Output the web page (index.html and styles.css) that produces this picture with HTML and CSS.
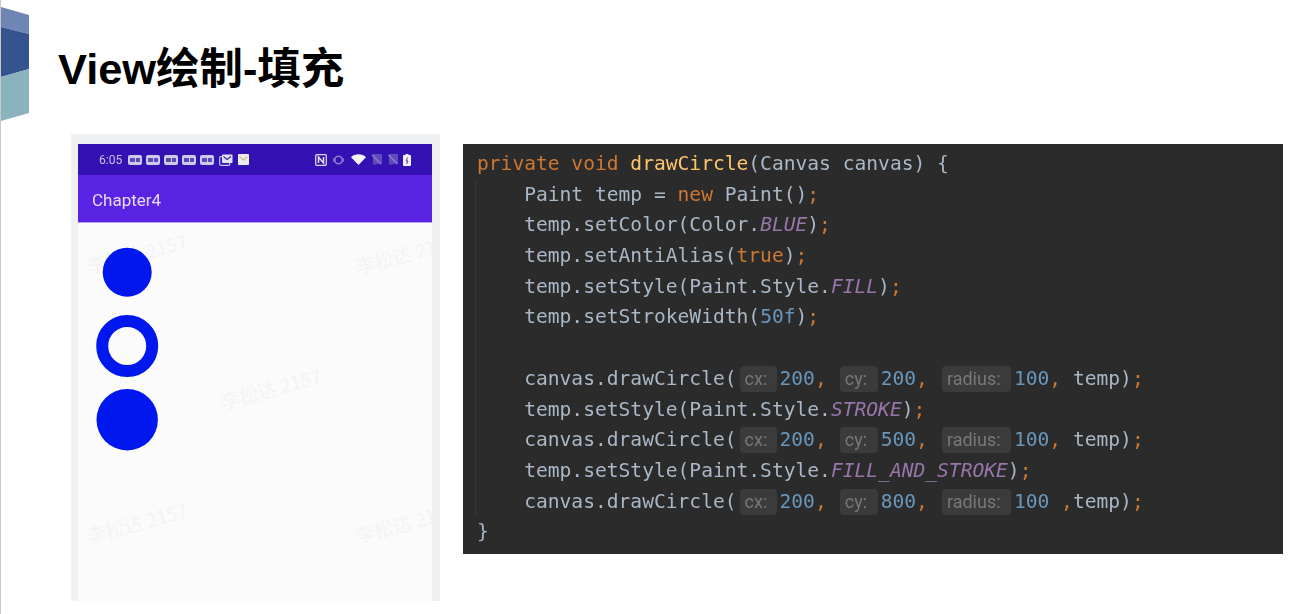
FILE: index.html
```html
<!DOCTYPE html>
<html lang="zh">
<head>
<meta charset="utf-8">
<title>View绘制-填充</title>
<link rel="stylesheet" href="styles.css">
</head>
<body>
<div class="slide">
  <svg class="decor" width="29" height="122" viewBox="0 0 29 122">
    <polygon points="0,7 28,15 28,34 0,27" fill="#6f86b5"/>
    <polygon points="0,27 28,34 28,69 0,77" fill="#34538f"/>
    <polygon points="0,77 28,69 28,113 0,121" fill="#8bb3bd"/>
  </svg>
  <h1 class="title">View绘制-填充</h1>
  <div class="content">
    <div class="phone">
      <div class="screen">
        <div class="statusbar">
          <span class="time">6:05</span>
          <span class="notif"><i></i><i></i></span>
          <span class="notif"><i></i><i></i></span>
          <span class="notif"><i></i><i></i></span>
          <span class="notif"><i></i><i></i></span>
          <span class="notif"><i></i><i></i></span>
          <svg class="ic gap1" width="14" height="12" viewBox="0 0 14 12"><rect x="0.7" y="2.7" width="10" height="8.6" rx="1" fill="none" stroke="#c9c3ea" stroke-width="1.2"/><rect x="3" y="0.5" width="10.5" height="8.5" rx="1" fill="#e4e1f5"/><path d="M4.5 2.5 8 5.5 12 2.5" fill="none" stroke="#3a2aa8" stroke-width="1.2"/></svg>
          <svg class="ic gap1" width="11" height="11" viewBox="0 0 11 11"><rect width="11" height="11" rx="1" fill="#eeeef2"/><path d="M1.5 2.5 5.5 6 9.5 2.5" fill="none" stroke="#c9c48a" stroke-width="1.4"/></svg>
          <span class="spacer"></span>
          <svg class="ic" width="12" height="12" viewBox="0 0 12 12"><rect x="0.7" y="0.7" width="10.6" height="10.6" rx="1" fill="none" stroke="#d8d6ee" stroke-width="1.3"/><path d="M3.5 9V3L8.5 9V3" fill="none" stroke="#e6e4f4" stroke-width="1.5"/></svg>
          <svg class="ic gap2" width="11" height="12" viewBox="0 0 11 12"><circle cx="5.5" cy="6" r="3.7" fill="none" stroke="#8d80d2" stroke-width="1.6"/><path d="M0.7 4V8M10.3 4V8" stroke="#8d80d2" stroke-width="1"/></svg>
          <svg class="ic gap3" width="15" height="11" viewBox="0 0 15 11"><path d="M0 3.2C4 -0.6 11 -0.6 15 3.2L7.5 11Z" fill="#f5f4fb"/></svg>
          <svg class="ic gap4" width="11" height="11" viewBox="0 0 11 11"><path d="M2 0H11V9L2 11Z" fill="#5f4cbb"/><path d="M1 1 10 10" stroke="#8a7bd0" stroke-width="1.4"/></svg>
          <svg class="ic gap5" width="10" height="11" viewBox="0 0 10 11"><path d="M1 0H10V9L1 11Z" fill="#5f4cbb"/><path d="M0.5 1 9.5 10" stroke="#8a7bd0" stroke-width="1.4"/></svg>
          <svg class="ic gap6" width="8" height="12" viewBox="0 0 8 12"><rect y="1" width="8" height="11" rx="1" fill="#f2f1f8"/><rect x="2.5" width="3" height="2" fill="#f2f1f8"/><path d="M4.6 3.5 3.2 7H5L3.6 10" fill="none" stroke="#3a2aa8" stroke-width="0.9"/></svg>
        </div>
        <div class="appbar">Chapter4</div>
        <div class="canvas">
          <span class="mark m1">李松达 2157</span>
          <span class="mark m2">李松达 2157</span>
          <span class="mark m3">李松达 2157</span>
          <span class="mark m4">李松达 2157</span>
          <span class="mark m5">李松达 2157</span>
          <svg class="shapes" width="354" height="240" viewBox="0 0 354 240">
            <circle cx="49.2" cy="49.2" r="24.5" fill="#0018ee"/>
            <circle cx="49.2" cy="123" r="25" fill="none" stroke="#0018ee" stroke-width="12"/>
            <circle cx="49.2" cy="196.7" r="30.7" fill="#0018ee"/>
          </svg>
        </div>
      </div>
    </div>
    <div class="code">
      <div class="guide"></div>
      <div class="ln"><span class="k">private void </span><span class="f">drawCircle</span>(Canvas canvas) {</div>
      <div class="ln in">Paint temp = <span class="k">new</span> Paint()<span class="k">;</span></div>
      <div class="ln in">temp.setColor(Color.<span class="c">BLUE</span>)<span class="k">;</span></div>
      <div class="ln in">temp.setAntiAlias(<span class="k">true</span>)<span class="k">;</span></div>
      <div class="ln in">temp.setStyle(Paint.Style.<span class="c">FILL</span>)<span class="k">;</span></div>
      <div class="ln in">temp.setStrokeWidth(<span class="n">50f</span>)<span class="k">;</span></div>
      <div class="ln in"></div>
      <div class="ln in">canvas.drawCircle(<span class="h hx">cx:</span><span class="n">200</span><span class="k">,</span><span class="h hy">cy:</span><span class="n">200</span><span class="k">,</span><span class="h hr">radius:</span><span class="n">100</span><span class="k">,</span> temp)<span class="k">;</span></div>
      <div class="ln in">temp.setStyle(Paint.Style.<span class="c">STROKE</span>)<span class="k">;</span></div>
      <div class="ln in">canvas.drawCircle(<span class="h hx">cx:</span><span class="n">200</span><span class="k">,</span><span class="h hy">cy:</span><span class="n">500</span><span class="k">,</span><span class="h hr">radius:</span><span class="n">100</span><span class="k">,</span> temp)<span class="k">;</span></div>
      <div class="ln in">temp.setStyle(Paint.Style.<span class="c">FILL_AND_STROKE</span>)<span class="k">;</span></div>
      <div class="ln in">canvas.drawCircle(<span class="h hx">cx:</span><span class="n">200</span><span class="k">,</span><span class="h hy">cy:</span><span class="n">800</span><span class="k">,</span><span class="h hr">radius:</span><span class="n">100</span> <span class="k">,</span>temp)<span class="k">;</span></div>
      <div class="ln">}</div>
    </div>
  </div>
</div>
</body>
</html>
```
FILE: styles.css
```css
* { box-sizing: border-box; }
html, body { margin: 0; padding: 0; background: #fff; }
body { width: 1294px; height: 614px; overflow: hidden; }
.slide {
  position: relative;
  height: 614px;
  border-left: 1px solid #c8c8c8;
  font-family: "Liberation Sans", "Noto Sans CJK SC", sans-serif;
}
.decor { position: absolute; left: 0; top: 0; display: block; }
.title {
  margin: 0;
  padding: 42px 0 0 57px;
  height: 134px;
  font-size: 43.4px;
  line-height: 54px;
  font-weight: 700;
  color: #000;
}
.content { display: flex; align-items: flex-start; padding-left: 70px; }
.phone {
  width: 369px;
  height: 467px;
  padding: 10px 8px 0 7px;
  background: #eff0f2;
}
.screen { height: 457px; display: flex; flex-direction: column; overflow: hidden; }
.statusbar {
  height: 31px;
  flex: none;
  display: flex;
  align-items: center;
  padding: 0 21px 0 21px;
  background: #3311b2;
  filter: blur(0.4px);
}
.time { font-family: Roboto, sans-serif; font-size: 12px; color: #c9c3ea; margin-right: 6px; }
.notif {
  width: 14px;
  height: 10px;
  margin-right: 4px;
  padding: 2px;
  display: flex;
  gap: 1px;
  align-items: center;
  background: #cfcaec;
  border-radius: 2px;
}
.notif i { flex: 1; height: 4px; background: #5a4bb8; }
.ic { display: block; flex: none; }
.gap1 { margin-left: 1px; margin-right: 4px; }
.gap2 { margin-left: 6px; }
.gap3 { margin-left: 7px; }
.gap4 { margin-left: 5px; }
.gap5 { margin-left: 6px; }
.gap6 { margin-left: 5px; }
.spacer { flex: 1; }
.appbar {
  height: 48px;
  flex: none;
  display: flex;
  align-items: center;
  padding: 3px 0 0 14px;
  background: #5a22e2;
  border-bottom: 1px solid #b9a0f2;
  color: #e6dcfa;
  font-family: Roboto, sans-serif;
  font-size: 17px;
  filter: blur(0.3px);
}
.canvas { position: relative; flex: 1; background: #fbfbfc; overflow: hidden; }
.shapes { position: relative; display: block; }
.mark {
  position: absolute;
  font-family: "Noto Sans CJK SC", sans-serif;
  font-size: 19px;
  line-height: 24px;
  white-space: nowrap;
  color: #f2f2f3;
  transform: rotate(-15deg);
  transform-origin: left center;
  filter: blur(0.4px);
}
.m1 { left: 9px; top: 32px; }
.m2 { left: 278px; top: 32px; }
.m3 { left: 143px; top: 167px; }
.m4 { left: 9px; top: 301px; }
.m5 { left: 278px; top: 301px; }
.code {
  position: relative;
  width: 820px;
  height: 410px;
  margin: 10px 0 0 23px;
  padding: 5px 0 0 14px;
  background: #2b2b2b;
  color: #a9b7c6;
  font-family: "DejaVu Sans Mono", monospace;
  font-size: 19.6px;
}
.guide { position: absolute; left: 12px; top: 36px; width: 1px; height: 336px; background: #383838; }
.ln { height: 30.7px; line-height: 30.7px; white-space: pre; filter: blur(0.25px); }
.in { padding-left: 47.2px; }
.k { color: #cc7832; }
.f { color: #ffc66d; }
.n { color: #6897bb; }
.c { color: #9876aa; font-style: italic; }
.h {
  display: inline-block;
  height: 26px;
  line-height: 26px;
  padding-left: 5px;
  margin-right: 3px;
  vertical-align: 0;
  background: #3b3b3b;
  border-radius: 4px;
  color: #787878;
  font-family: Roboto, sans-serif;
  font-size: 18px;
}
.hx { width: 37px; margin-left: 3px; }
.hy { width: 38px; margin-left: 13px; }
.hr { width: 69px; margin-left: 14px; }
```
